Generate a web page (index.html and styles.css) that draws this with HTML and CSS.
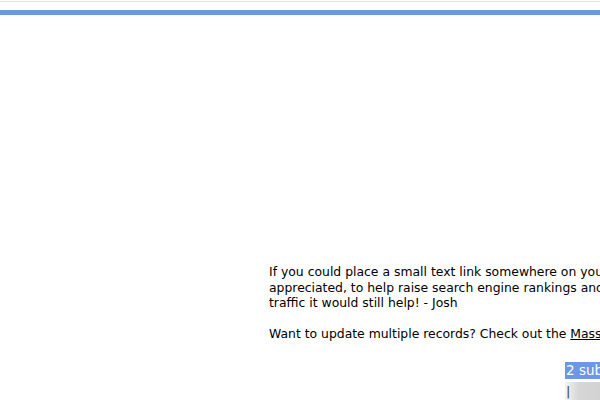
FILE: index.html
```html
<!DOCTYPE html>
<html lang="en">
<head>
    <meta charset="UTF-8">
    <title>Subscribers</title>
    <link rel="stylesheet" href="styles.css">
</head>
<body>
    <div class="topline"></div>
    <div class="header-bar"></div>

    <div class="page">
        <div class="sidebar"></div>
        <div class="content">
            <p class="note">If you could place a small text link somewhere on your site it would be greatly<br>
            appreciated, to help raise search engine rankings and bring in more visitors. Even if it doesn't bring<br>
            traffic it would still help! - Josh</p>

            <p class="note">Want to update multiple records? Check out the <a href="#">Mass Update</a> page.</p>

            <div class="picker">
                <div class="picker-selected">2 subscribers selected</div>
                <div class="picker-field"><span class="caret">|</span></div>
            </div>
        </div>
    </div>
</body>
</html>
```

FILE: styles.css
```css
html, body {
    overflow: hidden;
}
body {
    margin: 0;
    background: #ffffff;
    font-family: Verdana, "DejaVu Sans", sans-serif;
    font-size: 12.4px;
    color: #000000;
}
.topline {
    height: 1px;
    margin-top: 1px;
    background: #e6e2ea;
}
.header-bar {
    height: 5px;
    margin-top: 8px;
    background: #6f98d8;
}
.page {
    display: flex;
    width: 1100px;
}
.sidebar {
    width: 269px;
    flex-shrink: 0;
}
.content {
    width: 800px;
    padding-top: 249px;
}
.note {
    margin: 0 0 15px 0;
    line-height: 15.5px;
    white-space: nowrap;
}
.note a {
    color: #000000;
}
.picker {
    margin-left: 296px;
    margin-top: 21px;
    width: 200px;
}
.picker-selected {
    background: #6b98e0;
    color: #ffffff;
    font-size: 13.5px;
    line-height: 17px;
    padding-left: 1px;
}
.picker-field {
    margin-top: 3px;
    height: 19px;
    background: linear-gradient(to right, #f4f4f4 0, #d6d6d6 14px, #cfcfcf 60px, #e0e0e0 100%);
}
.caret {
    display: inline-block;
    margin-left: 1px;
    color: #444444;
    font-size: 13px;
    line-height: 19px;
}
```
